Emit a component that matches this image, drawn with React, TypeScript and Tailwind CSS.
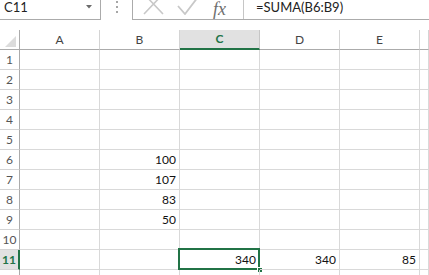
const cols = ["A", "B", "C", "D", "E", ""];
const rows = [1, 2, 3, 4, 5, 6, 7, 8, 9, 10, 11, 12];

const values: Record<string, string> = {
  B6: "100",
  B7: "107",
  B8: "83",
  B9: "50",
  C11: "340",
  D11: "340",
  E11: "85",
};

function FormulaBar() {
  return (
    <div className="flex h-[20px] items-stretch">
      {/* Name box */}
      <div className="relative flex w-[101px] items-start border-r border-b border-[#ababab] pl-[4px] text-[13px] leading-[15px] text-[#222]">
        C11
        <svg className="absolute right-[8px] top-[5px]" width="6" height="4" viewBox="0 0 6 4">
          <path d="M0 0 L6 0 L3 3.5 Z" fill="#6b6b6b" />
        </svg>
      </div>
      {/* Dots */}
      <div className="flex w-[31px] flex-col items-center gap-[3px] pt-[1px]">
        <div className="h-[2px] w-[2px] bg-[#a6a6a6]" />
        <div className="h-[2px] w-[2px] bg-[#a6a6a6]" />
        <div className="h-[2px] w-[2px] bg-[#a6a6a6]" />
      </div>
      {/* Icons + formula */}
      <div className="flex flex-1 items-start border-l border-b border-[#ababab]">
        <div className="flex h-full w-[111px] items-start border-r border-[#c6c6c6]">
          <svg className="ml-[10px]" width="22" height="15" viewBox="0 0 22 15">
            <path d="M1 -6 L20 14 M20 -6 L1 14" stroke="#c8c8c8" strokeWidth="1.6" fill="none" />
          </svg>
          <svg className="ml-[12px]" width="22" height="15" viewBox="0 0 22 15">
            <path d="M1 6 L8 14 L21 -3" stroke="#c8c8c8" strokeWidth="1.8" fill="none" />
          </svg>
          <span className="ml-[14px] text-[18px] leading-[19px] italic text-[#6e6e6e] [font-family:'Liberation_Serif',serif]">
            fx
          </span>
        </div>
        <div className="pl-[12px] text-[13px] leading-[15px] text-[#222]">=SUMA(B6:B9)</div>
      </div>
    </div>
  );
}

export default function App() {
  return (
    <div className="h-screen w-full overflow-hidden bg-white [font-family:Lato,'Liberation_Sans',sans-serif]">
      <FormulaBar />
      <div className="h-[10px]" />

      <div className="grid grid-cols-[20px_80px_80px_80px_80px_80px_1fr] auto-rows-[20px]">
        {/* Corner */}
        <div className="relative border-r border-b border-[#ababab]">
          <svg className="absolute right-[3px] bottom-[2px]" width="11" height="11" viewBox="0 0 11 11">
            <path d="M11 0 L11 11 L0 11 Z" fill="#dcdcdc" />
          </svg>
        </div>
        {cols.map((c) =>
          c === "C" ? (
            <div
              key={c}
              className="flex items-center justify-center border-r border-b-2 border-r-[#c6c6c6] border-b-[#217346] bg-[#e1e1e1] text-[12px] font-bold text-[#217346]"
            >
              {c}
            </div>
          ) : (
            <div
              key={c || "F"}
              className="flex items-center justify-center border-r border-b border-r-[#d4d4d4] border-b-[#ababab] text-[12px] text-[#444]"
            >
              {c}
            </div>
          )
        )}

        {rows.map((r) => (
          <Row key={r} r={r} />
        ))}
      </div>
    </div>
  );
}

function Row({ r }: { r: number }) {
  const active = r === 11;
  return (
    <>
      {active ? (
        <div className="flex items-center justify-center border-r-2 border-b border-r-[#217346] border-b-[#d4d4d4] bg-[#e1e1e1] text-[12px] font-bold text-[#217346]">
          {r}
        </div>
      ) : (
        <div className="flex items-center justify-center border-r border-b border-r-[#ababab] border-b-[#d4d4d4] text-[12px] text-[#555]">
          {r < 12 ? r : ""}
        </div>
      )}
      {cols.map((c) => {
        const key = `${c}${r}`;
        const v = values[key];
        const selected = key === "C11";
        return (
          <div
            key={key}
            className="relative flex items-center justify-end border-r border-b border-[#d9d9d9] pr-[3px] text-[12px] text-[#111]"
          >
            {v}
            {selected && (
              <>
                <div className="absolute -left-[2px] -top-[2px] -right-[1px] -bottom-[1px] border-2 border-[#217346]" />
                <div className="absolute -right-[4px] -bottom-[4px] h-[6px] w-[6px] border border-white bg-[#217346]" />
              </>
            )}
          </div>
        );
      })}
    </>
  );
}
